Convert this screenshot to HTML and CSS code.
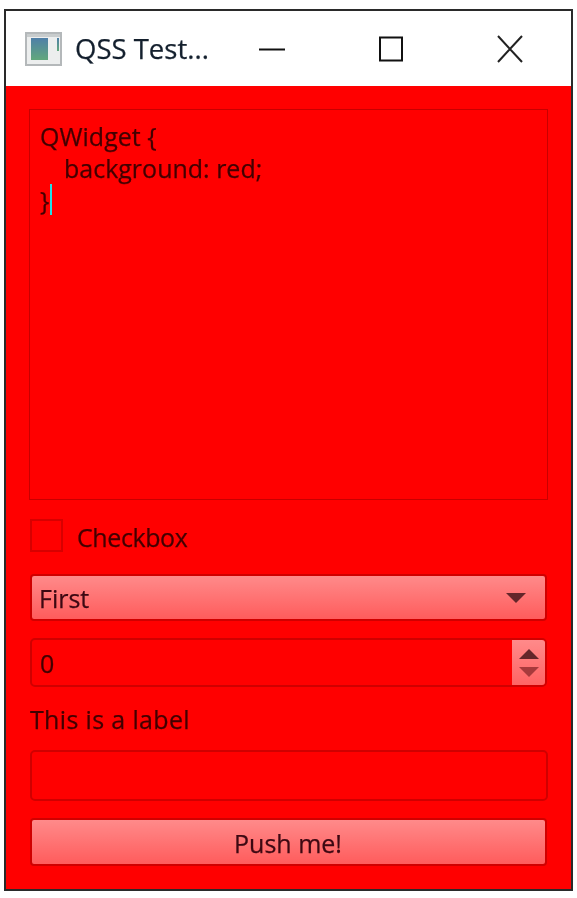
FILE: index.html
```html
<!DOCTYPE html>
<html lang="en">
<head>
    <meta charset="UTF-8" />
    <title>QSS Tester</title>
    <link rel="stylesheet" href="styles.css">
</head>
<body>

    <div class="window">
        <!-- Title bar -->
        <div class="titlebar">
            <svg class="app-icon" width="37" height="34" viewBox="0 0 37 34">
                <defs>
                    <linearGradient id="pane" x1="0" y1="0" x2="0" y2="1">
                        <stop offset="0" stop-color="#4f7fa8" />
                        <stop offset="1" stop-color="#62a87c" />
                    </linearGradient>
                </defs>
                <rect x="1" y="1" width="35" height="32" fill="#eceeee" stroke="#b4b8ba" stroke-width="2" />
                <rect x="2" y="2" width="33" height="3" fill="#c8cccd" />
                <rect x="6" y="6" width="17" height="22" fill="url(#pane)" />
                <rect x="32" y="6" width="2" height="13" fill="url(#pane)" />
            </svg>
            <span class="title">QSS Test...</span>
            <div class="controls">
                <svg class="control" width="26" height="26" viewBox="0 0 26 26">
                    <path d="M0 13.5H26" stroke="#111" stroke-width="2" fill="none" />
                </svg>
                <svg class="control" width="26" height="26" viewBox="0 0 26 26">
                    <rect x="2" y="1.5" width="22" height="23" stroke="#111" stroke-width="2" fill="none" />
                </svg>
                <svg class="control" width="26" height="28" viewBox="0 0 26 28">
                    <path d="M1 1L25 27M25 1L1 27" stroke="#222" stroke-width="2" fill="none" />
                </svg>
            </div>
        </div>

        <!-- Form -->
        <div class="content">
            <div class="editor">
                <div class="code">QWidget {</div>
                <div class="code indent">background: red;</div>
                <div class="code">}<span class="caret"></span></div>
            </div>

            <div class="check-row">
                <span class="checkbox"></span>
                <span class="check-text">Checkbox</span>
            </div>

            <div class="combo">
                <span>First</span>
                <span class="arrow-down"></span>
            </div>

            <div class="spin">
                <span class="spin-value">0</span>
                <div class="spin-buttons">
                    <span class="arrow-up"></span>
                    <span class="arrow-down faded"></span>
                </div>
            </div>

            <div class="label">This is a label</div>

            <div class="line-edit"></div>

            <div class="button">Push me!</div>
        </div>
    </div>

</body>
</html>
```

FILE: styles.css
```css
html, body {
    overflow: hidden;
}

body {
    margin: 0;
    padding: 9px 4px 0 4px;
    background: #ffffff;
    font-family: "Open Sans", "Noto Sans", sans-serif;
    font-size: 25px;
    color: #420000;
    -webkit-text-stroke: 0.25px currentColor;
}

.window {
    width: 565px;
    height: 878px;
    border: 2px solid #2a2a2a;
    display: flex;
    flex-direction: column;
    filter: blur(0.5px);
}

/* Title bar */
.titlebar {
    height: 75px;
    flex: none;
    background: #ffffff;
    display: flex;
    align-items: center;
    padding-left: 19px;
    box-sizing: border-box;
}

.app-icon {
    margin-right: 13px;
}

.title {
    font-size: 27.5px;
    color: #14202e;
    white-space: nowrap;
}

.controls {
    margin-left: auto;
    display: flex;
    gap: 93px;
    padding-right: 48px;
    align-items: center;
}

/* Form */
.content {
    flex: 1;
    background: #ff0000;
    padding: 23px 23px 0 24px;
    display: flex;
    flex-direction: column;
}

.editor {
    height: 391px;
    flex: none;
    margin-left: -1px;
    box-sizing: border-box;
    border: 1.5px solid #c80000;
    padding: 10px 10px;
}

.code {
    height: 32px;
    line-height: 32px;
    white-space: pre;
}

.indent {
    padding-left: 24px;
}

.caret {
    display: inline-block;
    width: 2px;
    height: 31px;
    background: #20e0e8;
    vertical-align: top;
    margin-left: 1px;
}

.check-row {
    display: flex;
    align-items: center;
    height: 34px;
    margin-top: 18px;
}

.checkbox {
    width: 33px;
    height: 33px;
    box-sizing: border-box;
    border: 2px solid #d80000;
    margin-right: 14px;
}

.check-text {
    padding-top: 4px;
    letter-spacing: -0.4px;
}

.combo,
.button {
    box-sizing: border-box;
    border: 2px solid #d00000;
    border-radius: 4px;
    background: linear-gradient(#ff8a8a, #ff5c5c);
    color: #3c0812;
    margin-right: 1px;
}

.combo {
    height: 47px;
    margin-top: 22px;
    display: flex;
    align-items: center;
    justify-content: space-between;
    padding: 0 19px 0 7px;
}

.arrow-down,
.arrow-up {
    width: 0;
    height: 0;
    border-left: 10px solid transparent;
    border-right: 10px solid transparent;
}

.arrow-down {
    border-top: 10px solid #64262a;
}

.arrow-up {
    border-bottom: 10px solid #64262a;
}

.arrow-down.faded {
    border-top-color: #a83a3c;
}

.spin {
    height: 49px;
    margin-top: 17px;
    margin-right: 1px;
    box-sizing: border-box;
    border: 2px solid #d00000;
    border-radius: 5px;
    display: flex;
    align-items: stretch;
    justify-content: space-between;
    overflow: hidden;
}

.spin-value {
    padding-left: 8px;
    line-height: 47px;
}

.spin-buttons {
    width: 33px;
    background: linear-gradient(#ff8a8a, #ff6464);
    display: flex;
    flex-direction: column;
    align-items: center;
    justify-content: center;
    gap: 8px;
}

.label {
    height: 34px;
    line-height: 34px;
    margin-top: 15px;
    letter-spacing: 0.35px;
}

.line-edit {
    height: 51px;
    margin-top: 14px;
    box-sizing: border-box;
    border: 2px solid #d00000;
    border-radius: 5px;
}

.button {
    height: 48px;
    margin-top: 17px;
    padding: 2px 1px 0 0;
    display: flex;
    align-items: center;
    justify-content: center;
}
```
